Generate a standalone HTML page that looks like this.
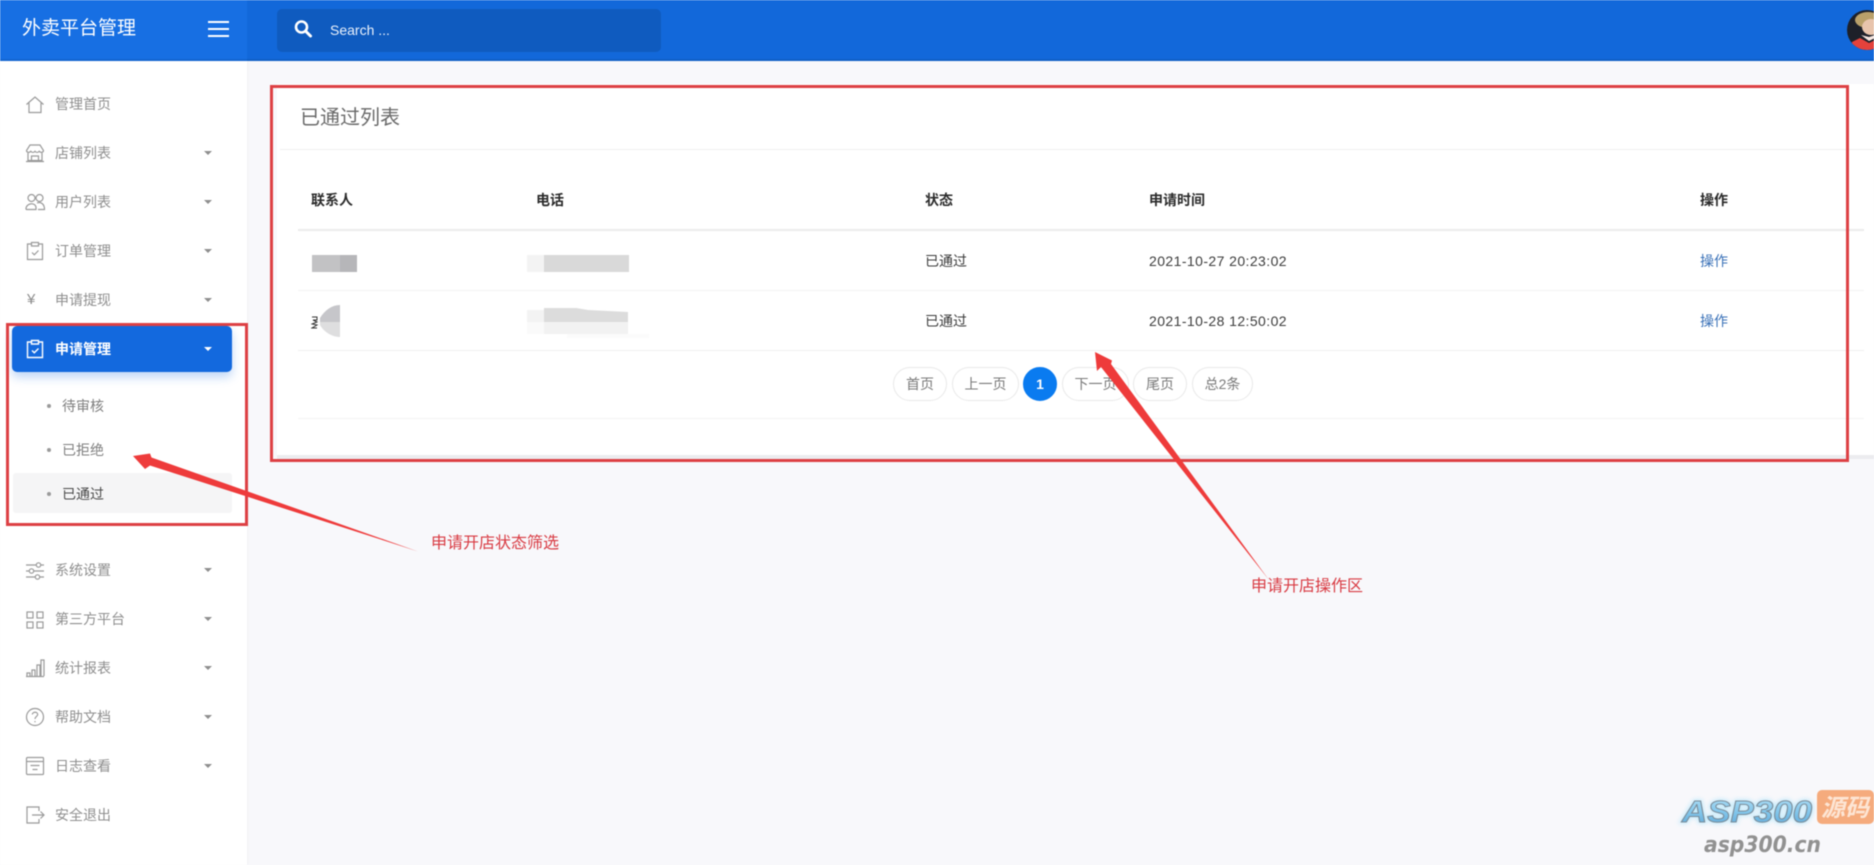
<!DOCTYPE html>
<html lang="zh-CN">
<head>
<meta charset="utf-8">
<title>外卖平台管理</title>
<style>
html,body{margin:0;padding:0;width:1874px;height:865px;overflow:hidden;background:#f8f8fb;font-family:"Liberation Sans","Noto Sans CJK SC",sans-serif;}
*{box-sizing:border-box}
#wrap{position:absolute;left:0;top:0;width:1874px;height:865px;overflow:hidden;filter:blur(.4px)}
.a{position:absolute}
.t{position:absolute;white-space:nowrap;line-height:20px;height:20px}
#top{left:0;top:0;width:1874px;height:61px;background:#1268da;border-bottom:2px solid #0f5fc6}
#brand{left:0;top:0;width:247px;height:61px;background:#176fe3;border-bottom:2px solid #1466d2}
#side{left:0;top:61px;width:247px;height:804px;background:#fff;box-shadow:1px 0 3px rgba(0,0,0,.03)}
.m{left:55px;font-size:14px;color:#8f8f8f}
.c{position:absolute;left:204px;width:0;height:0;border-left:4px solid transparent;border-right:4px solid transparent;border-top:4px solid #8f8f8f}
.i{position:absolute;left:25px;width:20px;height:20px;fill:none;stroke:#9a9a9a;stroke-width:1.2;overflow:visible}
.s{left:62px;font-size:14px;color:#7f7f7f}
.d{position:absolute;left:47px;width:4px;height:4px;border-radius:50%;background:#9a9a9a}
.th{font-size:14px;font-weight:700;color:#2b2b2b}
.td{font-size:14px;color:#3c3c3c}
.ln{position:absolute;left:298px;width:1566px;height:1px;background:#f0f0f0}
.p{position:absolute;top:367px;height:34px;border:1px solid #e9e9e9;border-radius:17px;background:#fff;font-size:14px;color:#7a7a7a;text-align:center;line-height:32px;white-space:nowrap}
.box{position:absolute;border:3px solid #dd4044}
</style>
</head>
<body>
<div id="wrap">
<div class="a" id="top"></div>
<div class="a" id="brand"></div>
<div class="t" style="left:22px;top:16px;height:26px;line-height:26px;font-size:19px;color:#fff">外卖平台管理</div>
<div class="a" style="left:208px;top:21px;width:21px;height:2px;background:#fff"></div>
<div class="a" style="left:208px;top:28px;width:21px;height:2px;background:#fff"></div>
<div class="a" style="left:208px;top:35px;width:21px;height:2px;background:#fff"></div>

<div class="a" style="left:277px;top:9px;width:384px;height:43px;background:#0f5bbf;border-radius:5px"></div>
<svg class="a" style="left:293px;top:19px" width="20" height="20" viewBox="0 0 20 20"><circle cx="8.5" cy="8" r="5.5" fill="none" stroke="#fff" stroke-width="2.6"/><path d="M12.5 12l5 5" stroke="#fff" stroke-width="3" stroke-linecap="round"/></svg>
<div class="t" style="left:330px;top:20px;font-size:14px;color:#e8f0fb">Search ...</div>

<svg class="a" style="left:1843px;top:8px" width="31" height="44" viewBox="0 0 31 44">
<defs><clipPath id="av"><circle cx="24" cy="22" r="20"/></clipPath></defs>
<g clip-path="url(#av)">
<rect width="48" height="44" fill="#1d2029"/>
<ellipse cx="25" cy="12" rx="13" ry="8" fill="#b9a06a"/>
<ellipse cx="28" cy="19" rx="9" ry="8" fill="#e8c4ac"/>
<path d="M8 44l1-10 8-4 9 5 6-3v12z" fill="#e4423c"/>
<path d="M18 27l8 6 6-3v-3l-6 2z" fill="#f6e6e0"/>
</g>
</svg>

<!-- sidebar -->
<div class="a" id="side"></div>

<svg class="i" style="top:95px" viewBox="0 0 20 20"><path d="M1.500 9.500L10 2l8.500 7.500M4 8v9.500h12V8"/></svg>
<div class="t m" style="top:94px">管理首页</div>

<svg class="i" style="top:143px" viewBox="0 0 20 20"><path d="M5 2h10l3.500 5.500c0 2-3 2.500-4.300.8-1 1.500-3.200 1.500-4.200 0-1 1.500-3.200 1.500-4.200 0C4.500 10 1.500 9.500 1.500 7.500zM3 10v7.500h14V10M6.500 17v-4h7v4M1 18.500h18"/></svg>
<div class="t m" style="top:143px">店铺列表</div><div class="c" style="top:151px"></div>

<svg class="i" style="top:192px" viewBox="0 0 20 20"><circle cx="6.500" cy="6" r="3.500"/><circle cx="14.500" cy="6" r="3.500"/><path d="M1 17c0-6 9-7 10-2v2.500H1.500zM12 11c4-1.500 7.500 1 7.500 6.500H13"/></svg>
<div class="t m" style="top:192px">用户列表</div><div class="c" style="top:200px"></div>

<svg class="i" style="top:241px" viewBox="0 0 20 20"><path d="M6 3H2.500v15.500h15V3H14M6.500 1.500h7v3.500h-7zM7 11.500l2.300 2.300L13.500 9.500"/></svg>
<div class="t m" style="top:241px">订单管理</div><div class="c" style="top:249px"></div>

<div class="t" style="left:27px;top:290px;font-size:15px;color:#8d8d8d">¥</div>
<div class="t m" style="top:290px">申请提现</div><div class="c" style="top:298px"></div>

<div class="a" style="left:12px;top:326px;width:220px;height:46px;background:#1369de;border-radius:5px;box-shadow:0 5px 10px rgba(19,105,222,.28)"></div>
<svg class="i" style="top:339px;stroke:#fff;stroke-width:1.4" viewBox="0 0 20 20"><path d="M6 3H2.500v15.500h15V3H14M6.500 1.500h7v3.500h-7zM7 11.500l2.300 2.300L13.500 9.500"/></svg>
<div class="t" style="left:55px;top:339px;font-size:14px;font-weight:700;color:#fff">申请管理</div>
<div class="c" style="top:347px;border-top-color:#fff"></div>

<div class="a" style="left:13px;top:473px;width:219px;height:40px;background:#f5f5f6;border-radius:3px"></div>
<div class="d" style="top:404px"></div><div class="t s" style="top:396px">待审核</div>
<div class="d" style="top:448px"></div><div class="t s" style="top:440px">已拒绝</div>
<div class="d" style="top:492px"></div><div class="t s" style="top:484px;color:#4a4a4a">已通过</div>

<svg class="i" style="top:561px" viewBox="0 0 20 20"><path d="M1 4h10M16 4h3M1 10h3M9 10h10M1 16h9M15 16h4"/><circle cx="13.500" cy="4" r="2.200"/><circle cx="6.500" cy="10" r="2.200"/><circle cx="12.500" cy="16" r="2.200"/></svg>
<div class="t m" style="top:560px">系统设置</div><div class="c" style="top:568px"></div>

<svg class="i" style="top:610px" viewBox="0 0 20 20"><rect x="2" y="2" width="6" height="6"/><rect x="12" y="2" width="6" height="6"/><rect x="2" y="12" width="6" height="6"/><rect x="12" y="12" width="6" height="6"/></svg>
<div class="t m" style="top:609px">第三方平台</div><div class="c" style="top:617px"></div>

<svg class="i" style="top:658px" viewBox="0 0 20 20"><path d="M1 18.500h18M2 18v-3h3v3M7 18v-6h3v6M12 18V7h3v11M16 18V2h3v16"/></svg>
<div class="t m" style="top:658px">统计报表</div><div class="c" style="top:666px"></div>

<svg class="i" style="top:707px" viewBox="0 0 20 20"><circle cx="10" cy="10" r="8.500"/><path d="M7.300 7.500C7.500 4.500 12.700 4.500 12.700 7.500c0 2-2.700 2-2.700 4.500M10 14v1.300"/></svg>
<div class="t m" style="top:707px">帮助文档</div><div class="c" style="top:715px"></div>

<svg class="i" style="top:756px" viewBox="0 0 20 20"><rect x="1.500" y="1.500" width="17" height="17" rx="1"/><path d="M1.500 5.500h17M5.500 9.500h9M7.500 13.500h5"/></svg>
<div class="t m" style="top:756px">日志查看</div><div class="c" style="top:764px"></div>

<svg class="i" style="top:805px" viewBox="0 0 20 20"><path d="M14 6V2H2v16h12v-4M7 10h12M15.500 6.500L19 10l-3.500 3.500"/></svg>
<div class="t m" style="top:805px">安全退出</div>

<!-- card -->
<div class="a" style="left:277px;top:84px;width:1597px;height:375px;background:#ececef"></div>
<div class="a" style="left:277px;top:84px;width:1597px;height:371px;background:#fff"></div>
<div class="t" style="left:300px;top:104px;height:28px;line-height:28px;font-size:20px;color:#6a6a6a">已通过列表</div>
<div class="a" style="left:280px;top:149px;width:1594px;height:1px;background:#efefef"></div>

<div class="t th" style="left:311px;top:190px">联系人</div>
<div class="t th" style="left:536px;top:190px">电话</div>
<div class="t th" style="left:925px;top:190px">状态</div>
<div class="t th" style="left:1149px;top:190px">申请时间</div>
<div class="t th" style="left:1700px;top:190px">操作</div>
<div class="ln" style="top:229px;height:2px;background:#ebebeb"></div>

<div class="a" style="left:312px;top:255px;width:28px;height:17px;background:#c2c2c4"></div>
<div class="a" style="left:340px;top:255px;width:17px;height:17px;background:#b6b6b9"></div>
<div class="a" style="left:527px;top:255px;width:17px;height:17px;background:#f3f3f3"></div>
<div class="a" style="left:544px;top:255px;width:85px;height:17px;background:#d9d9d9"></div>
<div class="t td" style="left:925px;top:251px">已通过</div>
<div class="t td" style="left:1149px;top:251px;letter-spacing:.42px">2021-10-27 20:23:02</div>
<div class="t" style="left:1700px;top:251px;font-size:14px;color:#3b72b8">操作</div>
<div class="ln" style="top:290px;background:#f3f3f3"></div>

<svg class="a" style="left:311px;top:304px" width="32" height="36" viewBox="0 0 32 36">
<path d="M29 1C21 1 14 6 9 14V18H29z" fill="#c6c6ca"/>
<path d="M9 18V21C13 28 21 33 29 33V18z" fill="#dededf"/>
<path d="M1 13h5v3H2l4 2-5 2 5 1-5 3 5 0" fill="none" stroke="#333" stroke-width="1"/>
</svg>
<svg class="a" style="left:527px;top:308px" width="122" height="36" viewBox="0 0 122 36">
<rect x="0" y="2" width="17" height="12" fill="#f3f3f3"/>
<path d="M17 0h32l12 2 40 2v10H17z" fill="#dcdcdc"/>
<rect x="0" y="14" width="17" height="12" fill="#fafafa"/>
<rect x="17" y="14" width="84" height="12" fill="#f2f2f2"/>
<rect x="40" y="26" width="82" height="4" fill="#fbfbfb"/>
</svg>
<div class="t td" style="left:925px;top:311px">已通过</div>
<div class="t td" style="left:1149px;top:311px;letter-spacing:.42px">2021-10-28 12:50:02</div>
<div class="t" style="left:1700px;top:311px;font-size:14px;color:#3b72b8">操作</div>
<div class="ln" style="top:350px;background:#f0f0f0"></div>

<div class="p" style="left:893px;width:54px">首页</div>
<div class="p" style="left:952px;width:67px">上一页</div>
<div class="p" style="left:1023px;width:34px;background:#0a7bf0;border-color:#0a7bf0;color:#fff;font-weight:700">1</div>
<div class="p" style="left:1062px;width:67px">下一页</div>
<div class="p" style="left:1133px;width:54px">尾页</div>
<div class="p" style="left:1192px;width:61px">总2条</div>
<div class="ln" style="top:418px;background:#f3f3f3"></div>

<!-- red boxes -->
<div class="box" style="left:270px;top:85px;width:1579px;height:377px"></div>
<div class="box" style="left:6px;top:323px;width:242px;height:203px"></div>

<!-- arrows -->
<svg class="a" style="left:0;top:0" width="1874" height="865" viewBox="0 0 1874 865">
<path d="M133 456L150 453.500 151.500 457.500 418 551.500 150 465.500 145 469z" fill="#ee3b3b"/>
<path d="M1095 352L1112 360.500 1111 364 1269 580 1101 367 1097 371z" fill="#ee3b3b"/>
</svg>
<div class="t" style="left:431px;top:534px;font-size:16px;color:#d83a42">申请开店状态筛选</div>
<div class="t" style="left:1251px;top:577px;font-size:16px;color:#d83a42">申请开店操作区</div>

<!-- watermark -->
<svg class="a" style="left:1670px;top:785px" width="204" height="78" viewBox="0 0 204 78">
<defs>
<linearGradient id="wg" x1="0" y1="0" x2="0" y2="1"><stop offset="0" stop-color="#b5e2f7"/><stop offset=".55" stop-color="#7fc4ea"/><stop offset="1" stop-color="#5ba3d2"/></linearGradient>
<filter id="glow" x="-20%" y="-30%" width="140%" height="160%"><feGaussianBlur stdDeviation="2"/></filter>
</defs>
<text x="12" y="37" font-family="Liberation Sans" font-size="31" font-weight="700" font-style="italic" fill="#bfe9fb" stroke="#bfe9fb" stroke-width="3" filter="url(#glow)" textLength="130" lengthAdjust="spacingAndGlyphs">ASP300</text>
<text x="12" y="37" font-family="Liberation Sans" font-size="31" font-weight="700" font-style="italic" fill="url(#wg)" stroke="#7b8c99" stroke-width="1" textLength="130" lengthAdjust="spacingAndGlyphs">ASP300</text>
<rect x="147" y="5" width="57" height="34" rx="5" fill="#f5ab7d"/>
<text x="151" y="31" font-family="Noto Sans CJK SC" font-size="24" font-style="italic" font-weight="700" fill="#fde5d4">源码</text>
<text x="34" y="67" font-family="DejaVu Sans" font-size="22" font-weight="700" font-style="italic" fill="#919191" textLength="117" lengthAdjust="spacingAndGlyphs">asp300.cn</text>
</svg>
</div>
</body>
</html>
